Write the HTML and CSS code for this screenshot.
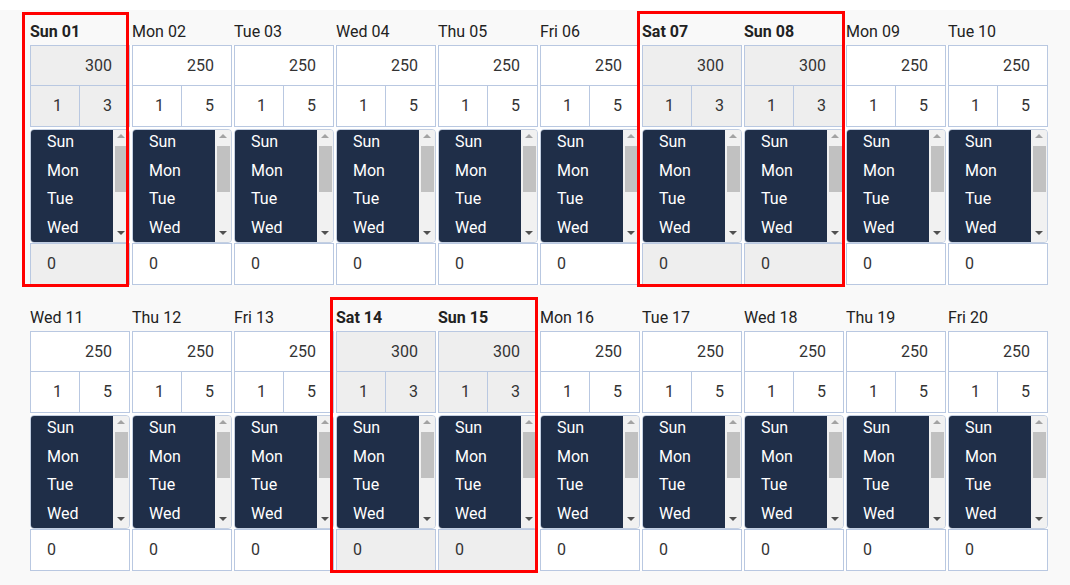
FILE: index.html
```html
<!DOCTYPE html>
<html lang="en">
<head>
<meta charset="utf-8">
<title>Rates calendar</title>
<link rel="stylesheet" href="styles.css">
</head>
<body>
<main class="page">
  <section class="week">
    <div class="day weekend">
      <div class="label">Sun 01</div>
      <div class="price">300</div>
      <div class="qty"><span>1</span><span>3</span></div>
      <div class="list"><div class="opts"><div>Sun</div><div>Mon</div><div>Tue</div><div>Wed</div></div><div class="sb"><i class="up"></i><i class="thumb"></i><i class="down"></i></div></div>
      <div class="zero">0</div>
    </div>
    <div class="day">
      <div class="label">Mon 02</div>
      <div class="price">250</div>
      <div class="qty"><span>1</span><span>5</span></div>
      <div class="list"><div class="opts"><div>Sun</div><div>Mon</div><div>Tue</div><div>Wed</div></div><div class="sb"><i class="up"></i><i class="thumb"></i><i class="down"></i></div></div>
      <div class="zero">0</div>
    </div>
    <div class="day">
      <div class="label">Tue 03</div>
      <div class="price">250</div>
      <div class="qty"><span>1</span><span>5</span></div>
      <div class="list"><div class="opts"><div>Sun</div><div>Mon</div><div>Tue</div><div>Wed</div></div><div class="sb"><i class="up"></i><i class="thumb"></i><i class="down"></i></div></div>
      <div class="zero">0</div>
    </div>
    <div class="day">
      <div class="label">Wed 04</div>
      <div class="price">250</div>
      <div class="qty"><span>1</span><span>5</span></div>
      <div class="list"><div class="opts"><div>Sun</div><div>Mon</div><div>Tue</div><div>Wed</div></div><div class="sb"><i class="up"></i><i class="thumb"></i><i class="down"></i></div></div>
      <div class="zero">0</div>
    </div>
    <div class="day">
      <div class="label">Thu 05</div>
      <div class="price">250</div>
      <div class="qty"><span>1</span><span>5</span></div>
      <div class="list"><div class="opts"><div>Sun</div><div>Mon</div><div>Tue</div><div>Wed</div></div><div class="sb"><i class="up"></i><i class="thumb"></i><i class="down"></i></div></div>
      <div class="zero">0</div>
    </div>
    <div class="day">
      <div class="label">Fri 06</div>
      <div class="price">250</div>
      <div class="qty"><span>1</span><span>5</span></div>
      <div class="list"><div class="opts"><div>Sun</div><div>Mon</div><div>Tue</div><div>Wed</div></div><div class="sb"><i class="up"></i><i class="thumb"></i><i class="down"></i></div></div>
      <div class="zero">0</div>
    </div>
    <div class="day weekend">
      <div class="label">Sat 07</div>
      <div class="price">300</div>
      <div class="qty"><span>1</span><span>3</span></div>
      <div class="list"><div class="opts"><div>Sun</div><div>Mon</div><div>Tue</div><div>Wed</div></div><div class="sb"><i class="up"></i><i class="thumb"></i><i class="down"></i></div></div>
      <div class="zero">0</div>
    </div>
    <div class="day weekend">
      <div class="label">Sun 08</div>
      <div class="price">300</div>
      <div class="qty"><span>1</span><span>3</span></div>
      <div class="list"><div class="opts"><div>Sun</div><div>Mon</div><div>Tue</div><div>Wed</div></div><div class="sb"><i class="up"></i><i class="thumb"></i><i class="down"></i></div></div>
      <div class="zero">0</div>
    </div>
    <div class="day">
      <div class="label">Mon 09</div>
      <div class="price">250</div>
      <div class="qty"><span>1</span><span>5</span></div>
      <div class="list"><div class="opts"><div>Sun</div><div>Mon</div><div>Tue</div><div>Wed</div></div><div class="sb"><i class="up"></i><i class="thumb"></i><i class="down"></i></div></div>
      <div class="zero">0</div>
    </div>
    <div class="day">
      <div class="label">Tue 10</div>
      <div class="price">250</div>
      <div class="qty"><span>1</span><span>5</span></div>
      <div class="list"><div class="opts"><div>Sun</div><div>Mon</div><div>Tue</div><div>Wed</div></div><div class="sb"><i class="up"></i><i class="thumb"></i><i class="down"></i></div></div>
      <div class="zero">0</div>
    </div>
    <div class="mark mark-a"></div>
    <div class="mark mark-b"></div>
  </section>

  <section class="week">
    <div class="day">
      <div class="label">Wed 11</div>
      <div class="price">250</div>
      <div class="qty"><span>1</span><span>5</span></div>
      <div class="list"><div class="opts"><div>Sun</div><div>Mon</div><div>Tue</div><div>Wed</div></div><div class="sb"><i class="up"></i><i class="thumb"></i><i class="down"></i></div></div>
      <div class="zero">0</div>
    </div>
    <div class="day">
      <div class="label">Thu 12</div>
      <div class="price">250</div>
      <div class="qty"><span>1</span><span>5</span></div>
      <div class="list"><div class="opts"><div>Sun</div><div>Mon</div><div>Tue</div><div>Wed</div></div><div class="sb"><i class="up"></i><i class="thumb"></i><i class="down"></i></div></div>
      <div class="zero">0</div>
    </div>
    <div class="day">
      <div class="label">Fri 13</div>
      <div class="price">250</div>
      <div class="qty"><span>1</span><span>5</span></div>
      <div class="list"><div class="opts"><div>Sun</div><div>Mon</div><div>Tue</div><div>Wed</div></div><div class="sb"><i class="up"></i><i class="thumb"></i><i class="down"></i></div></div>
      <div class="zero">0</div>
    </div>
    <div class="day weekend">
      <div class="label">Sat 14</div>
      <div class="price">300</div>
      <div class="qty"><span>1</span><span>3</span></div>
      <div class="list"><div class="opts"><div>Sun</div><div>Mon</div><div>Tue</div><div>Wed</div></div><div class="sb"><i class="up"></i><i class="thumb"></i><i class="down"></i></div></div>
      <div class="zero">0</div>
    </div>
    <div class="day weekend">
      <div class="label">Sun 15</div>
      <div class="price">300</div>
      <div class="qty"><span>1</span><span>3</span></div>
      <div class="list"><div class="opts"><div>Sun</div><div>Mon</div><div>Tue</div><div>Wed</div></div><div class="sb"><i class="up"></i><i class="thumb"></i><i class="down"></i></div></div>
      <div class="zero">0</div>
    </div>
    <div class="day">
      <div class="label">Mon 16</div>
      <div class="price">250</div>
      <div class="qty"><span>1</span><span>5</span></div>
      <div class="list"><div class="opts"><div>Sun</div><div>Mon</div><div>Tue</div><div>Wed</div></div><div class="sb"><i class="up"></i><i class="thumb"></i><i class="down"></i></div></div>
      <div class="zero">0</div>
    </div>
    <div class="day">
      <div class="label">Tue 17</div>
      <div class="price">250</div>
      <div class="qty"><span>1</span><span>5</span></div>
      <div class="list"><div class="opts"><div>Sun</div><div>Mon</div><div>Tue</div><div>Wed</div></div><div class="sb"><i class="up"></i><i class="thumb"></i><i class="down"></i></div></div>
      <div class="zero">0</div>
    </div>
    <div class="day">
      <div class="label">Wed 18</div>
      <div class="price">250</div>
      <div class="qty"><span>1</span><span>5</span></div>
      <div class="list"><div class="opts"><div>Sun</div><div>Mon</div><div>Tue</div><div>Wed</div></div><div class="sb"><i class="up"></i><i class="thumb"></i><i class="down"></i></div></div>
      <div class="zero">0</div>
    </div>
    <div class="day">
      <div class="label">Thu 19</div>
      <div class="price">250</div>
      <div class="qty"><span>1</span><span>5</span></div>
      <div class="list"><div class="opts"><div>Sun</div><div>Mon</div><div>Tue</div><div>Wed</div></div><div class="sb"><i class="up"></i><i class="thumb"></i><i class="down"></i></div></div>
      <div class="zero">0</div>
    </div>
    <div class="day">
      <div class="label">Fri 20</div>
      <div class="price">250</div>
      <div class="qty"><span>1</span><span>5</span></div>
      <div class="list"><div class="opts"><div>Sun</div><div>Mon</div><div>Tue</div><div>Wed</div></div><div class="sb"><i class="up"></i><i class="thumb"></i><i class="down"></i></div></div>
      <div class="zero">0</div>
    </div>
    <div class="mark mark-c"></div>
  </section>
</main>
</body>
</html>
```

FILE: styles.css
```css
html, body {
  margin: 0;
  padding: 0;
  background: #ffffff;
}

body {
  font-family: Roboto, "Liberation Sans", Arial, sans-serif;
  font-size: 16px;
  color: #222222;
}

.page {
  margin-top: 10px;
  background: #f9f9f9;
  padding: 11px 0 15px 30px;
  min-height: 575px;
  box-sizing: border-box;
}

.week {
  position: relative;
  display: flex;
  gap: 2px;
  width: max-content;
  background: linear-gradient(#f9f9f9 24px, #ffffff 24px);
}

.week + .week {
  margin-top: 22px;
}

.day {
  width: 100px;
  display: flex;
  flex-direction: column;
}

.label {
  height: 24px;
  line-height: 22px;
  white-space: nowrap;
  color: #222222;
}

.weekend .label {
  font-weight: 700;
}

.price,
.qty span,
.zero {
  border: 1px solid #b9c8e1;
  box-sizing: border-box;
  background: #ffffff;
  color: #333333;
}

.price {
  height: 41px;
  line-height: 39px;
  text-align: right;
  padding-right: 17px;
}

.qty {
  display: flex;
  margin-top: -1px;
  height: 42px;
}

.qty span {
  width: 50px;
  height: 42px;
  line-height: 40px;
  text-align: right;
  padding-right: 17px;
}

.qty span + span {
  width: 51px;
  margin-left: -1px;
}

.zero {
  height: 42px;
  line-height: 40px;
  padding-left: 16px;
}

.weekend .price,
.weekend .qty span,
.weekend .zero {
  background: #eeeeee;
}

.list {
  margin-top: 2px;
  height: 114px;
  box-sizing: border-box;
  border: 1px solid #c3cfe2;
  border-radius: 4px;
  overflow: hidden;
  display: flex;
  background: #f1f1f1;
}

.opts {
  width: 82px;
  background: #1f2e48;
  color: #ffffff;
  overflow: hidden;
}

.opts div {
  height: 28.7px;
  line-height: 24px;
  padding-left: 16px;
}

.sb {
  flex: 1;
  display: flex;
  flex-direction: column;
  align-items: center;
  background: #f1f1f1;
}

.sb i {
  display: block;
}

.up {
  margin-top: 4px;
  width: 0;
  height: 0;
  border-left: 4px solid transparent;
  border-right: 4px solid transparent;
  border-bottom: 4px solid #a3a3a3;
}

.thumb {
  margin-top: 8px;
  width: 13px;
  height: 46px;
  background: #c1c1c1;
}

.down {
  margin-top: auto;
  margin-bottom: 7px;
  width: 0;
  height: 0;
  border-left: 4px solid transparent;
  border-right: 4px solid transparent;
  border-top: 4px solid #505050;
}

.mark {
  position: absolute;
  border: 3px solid #ff0000;
  box-sizing: border-box;
  pointer-events: none;
}

.mark-a {
  left: -8px;
  top: -9px;
  width: 107px;
  height: 275px;
}

.mark-b {
  left: 607px;
  top: -10px;
  width: 208px;
  height: 276px;
}

.mark-c {
  left: 300px;
  top: -10px;
  width: 208px;
  height: 276px;
}
```
